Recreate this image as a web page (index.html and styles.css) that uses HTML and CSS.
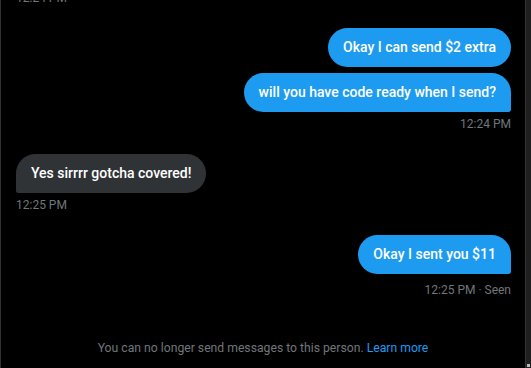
FILE: index.html
```html
<!DOCTYPE html>
<html lang="en">
<head>
<meta charset="utf-8">
<title>Messages</title>
<link rel="stylesheet" href="styles.css">
</head>
<body>
<div class="app">
  <main class="pane">
    <section class="thread">
      <div class="time time-first">12:24 PM</div>
      <div class="group group-sent">
        <div class="bubble sent">Okay I can send $2 extra</div>
        <div class="bubble sent tail">will you have code ready when I send?</div>
        <div class="time">12:24 PM</div>
      </div>
      <div class="group group-received">
        <div class="bubble received tail">Yes sirrrr gotcha covered!</div>
        <div class="time">12:25 PM</div>
      </div>
      <div class="group group-sent">
        <div class="bubble sent tail">Okay I sent you $11</div>
        <div class="time time-seen">12:25 PM · Seen</div>
      </div>
    </section>
    <footer class="notice">You can no longer send messages to this person. <a class="notice-link" href="#">Learn more</a></footer>
  </main>
  <div class="scrollbar"><span class="scroll-arrow"></span></div>
</div>
</body>
</html>
```

FILE: styles.css
```css
* { box-sizing: border-box; }
html, body {
  margin: 0;
  padding: 0;
  background: #000;
  height: 100%;
  overflow: hidden;
}
body {
  font-family: Roboto, "Liberation Sans", sans-serif;
  color: #e7e9ea;
}
.app {
  display: flex;
  height: 368px;
  width: 531px;
}
.pane {
  width: 526px;
  display: flex;
  flex-direction: column;
  border-left: 1px solid #2f3336;
  border-right: 1px solid #2f3336;
  background: #000;
  overflow: hidden;
}
.thread {
  flex: 1;
  display: flex;
  flex-direction: column;
  gap: 22px;
  padding: 0 14px 0 15px;
  margin-top: -10px;
}
.group {
  display: flex;
  flex-direction: column;
  gap: 6px;
}
.group-sent { align-items: flex-end; }
.group-received { align-items: flex-start; }
.bubble {
  font-size: 14px;
  font-weight: 500;
  line-height: 19px;
  padding: 10px 15px;
  border-radius: 22px;
  color: #fff;
  max-width: 85%;
}
.sent { background: #1d9bf0; }
.received { background: #2f3336; }
.sent.tail { border-bottom-right-radius: 3px; }
.received.tail { border-bottom-left-radius: 3px; }
.time {
  font-size: 12px;
  line-height: 16px;
  color: #71767b;
  margin-top: -2px;
}
.time-first { margin-top: 0; }
.time-seen { margin-top: 2px; }
.notice {
  text-align: center;
  font-size: 12.2px;
  line-height: 16px;
  color: #71767b;
  padding-bottom: 12px;
}
.notice-link {
  color: #1d9bf0;
  text-decoration: none;
}
.scrollbar {
  width: 5px;
  background: #1f1f1f;
  position: relative;
}
.scroll-arrow {
  position: absolute;
  left: 1px;
  bottom: 1px;
  width: 3px;
  height: 3px;
  background: #bbb;
}
```
